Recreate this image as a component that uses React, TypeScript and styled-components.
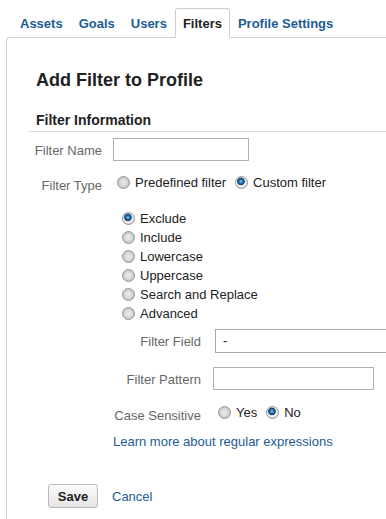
import React from "react";
import styled, { createGlobalStyle } from "styled-components";

const Global = createGlobalStyle`
  html, body { margin: 0; padding: 0; background: #fff; overflow: hidden; }
  body { font-family: "Liberation Sans", Arial, sans-serif; font-size: 13px; color: #222; }
`;

const BLUE = "#1d5b96";

const Page = styled.div`
  width: 386px;
  height: 519px;
  overflow: hidden;
`;

const TabBar = styled.div`
  display: flex;
  padding: 8px 0 0 12px;
  position: relative;
  z-index: 1;
`;

const Tab = styled.div<{ $active?: boolean }>`
  box-sizing: border-box;
  height: 30px;
  padding: 1px 7px 0;
  line-height: 27px;
  font-weight: bold;
  font-size: 13px;
  white-space: nowrap;
  border: 1px solid ${(p) => (p.$active ? "#cfcfcf" : "transparent")};
  border-bottom-color: ${(p) => (p.$active ? "#fff" : "transparent")};
  border-radius: 3px 3px 0 0;
  background: ${(p) => (p.$active ? "#fff" : "transparent")};
  color: ${(p) => (p.$active ? "#222" : BLUE)};
`;

const Panel = styled.div`
  position: relative;
  margin: -1px 0 0 6px;
  width: 640px;
  min-height: 500px;
  border-top: 1px solid #cfcfcf;
  border-left: 1px solid #cfcfcf;
  border-top-left-radius: 4px;
  padding: 0 0 0 21px;
`;

const Title = styled.h1`
  margin: 31px 0 0;
  padding-left: 8px;
  font-size: 18px;
  line-height: 22px;
  font-weight: bold;
  color: #222;
`;

const SectionHeader = styled.h2`
  margin: 20px 0 0;
  padding: 0 0 2px 8px;
  font-size: 14px;
  line-height: 18px;
  font-weight: bold;
  color: #222;
  border-bottom: 1px solid #dcdcdc;
`;

const Row = styled.div<{ $top: number }>`
  display: flex;
  align-items: flex-start;
  margin-top: ${(p) => p.$top}px;
`;

const Label = styled.div<{ $width: number; $gap: number; $drop?: number }>`
  flex: none;
  width: ${(p) => p.$width}px;
  margin-right: ${(p) => p.$gap}px;
  text-align: right;
  color: #676767;
  line-height: 17px;
  padding-top: ${(p) => p.$drop ?? 0}px;
`;

const TextInput = styled.div<{ $width: number; $height: number }>`
  box-sizing: border-box;
  width: ${(p) => p.$width}px;
  height: ${(p) => p.$height}px;
  border: 1px solid #b0b0b0;
  background: #fff;
`;

const SelectBox = styled.div`
  box-sizing: border-box;
  width: 260px;
  height: 24px;
  border: 1px solid #a9a9a9;
  background: #fff;
  padding-left: 7px;
  line-height: 21px;
  color: #222;
`;

const InlineGroup = styled.div`
  display: flex;
  align-items: center;
  line-height: 17px;
  color: #222;
`;

const Choice = styled.label<{ $gap?: number }>`
  display: flex;
  align-items: center;
  gap: ${(p) => p.$gap ?? 5}px;
  margin-right: 9px;
  white-space: nowrap;
`;

const Radio = styled.span<{ $checked?: boolean }>`
  flex: none;
  box-sizing: border-box;
  width: 13px;
  height: 13px;
  border-radius: 50%;
  border: 1px solid #939393;
  background: ${(p) =>
    p.$checked
      ? "radial-gradient(circle at 45% 40%, #8fd0f5 0, #2a7fbf 1.6px, #143f66 3.4px, #e9e9e9 4.2px, #f4f4f4 5px, #dcdcdc 6px)"
      : "radial-gradient(circle at 50% 50%, #ececec 0, #d9d9d9 3.5px, #c6c6c6 5px, #e6e6e6 6px)"};
`;

const Nested = styled.div`
  margin-left: 85px;
`;

const RadioList = styled.div`
  margin-top: 15px;
  padding-left: 9px;
  display: flex;
  flex-direction: column;
  color: #222;
`;

const ListItem = styled.label`
  display: flex;
  align-items: center;
  gap: 5px;
  height: 19px;
  white-space: nowrap;
`;

const Link = styled.a`
  display: block;
  color: ${BLUE};
  text-decoration: none;
  line-height: 17px;
  cursor: pointer;
`;

const HelpLink = styled(Link)`
  margin-top: 9px;
`;

const Actions = styled.div`
  display: flex;
  align-items: center;
  gap: 14px;
  margin: 34px 0 0 20px;
`;

const SaveButton = styled.button`
  box-sizing: border-box;
  width: 50px;
  height: 24px;
  padding: 0;
  font-family: inherit;
  font-size: 13px;
  font-weight: bold;
  color: #222;
  border: 1px solid #b9b9b9;
  border-radius: 3px;
  background: linear-gradient(#fbfbfb, #e4e4e4);
`;

const CancelLink = styled(Link)`
  display: inline;
`;

const filterOptions = [
  "Exclude",
  "Include",
  "Lowercase",
  "Uppercase",
  "Search and Replace",
  "Advanced",
];

export default function App() {
  return (
    <Page>
      <Global />
      <TabBar>
        <Tab>Assets</Tab>
        <Tab>Goals</Tab>
        <Tab>Users</Tab>
        <Tab $active>Filters</Tab>
        <Tab>Profile Settings</Tab>
      </TabBar>
      <Panel>
        <Title>Add Filter to Profile</Title>
        <SectionHeader>Filter Information</SectionHeader>

        <Row $top={6}>
          <Label $width={74} $gap={11} $drop={4}>
            Filter Name
          </Label>
          <TextInput $width={136} $height={23} />
        </Row>

        <Row $top={13}>
          <Label $width={74} $gap={15} $drop={3}>
            Filter Type
          </Label>
          <InlineGroup>
            <Choice>
              <Radio />
              Predefined filter
            </Choice>
            <Choice>
              <Radio $checked />
              Custom filter
            </Choice>
          </InlineGroup>
        </Row>

        <Nested>
          <RadioList>
            {filterOptions.map((o, i) => (
              <ListItem key={o}>
                <Radio $checked={i === 0} />
                {o}
              </ListItem>
            ))}
          </RadioList>

          <Row $top={6}>
            <Label $width={88} $gap={14} $drop={4}>
              Filter Field
            </Label>
            <SelectBox>-</SelectBox>
          </Row>

          <Row $top={14}>
            <Label $width={88} $gap={12} $drop={4}>
              Filter Pattern
            </Label>
            <TextInput $width={161} $height={23} />
          </Row>

          <Row $top={14}>
            <Label $width={88} $gap={17} $drop={3}>
              Case Sensitive
            </Label>
            <InlineGroup>
              <Choice>
                <Radio />
                Yes
              </Choice>
              <Choice>
                <Radio $checked />
                No
              </Choice>
            </InlineGroup>
          </Row>

          <HelpLink>Learn more about regular expressions</HelpLink>
        </Nested>

        <Actions>
          <SaveButton>Save</SaveButton>
          <CancelLink>Cancel</CancelLink>
        </Actions>
      </Panel>
    </Page>
  );
}
